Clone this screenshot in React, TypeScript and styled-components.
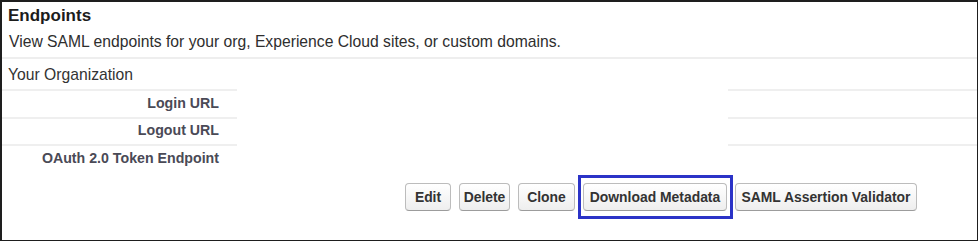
import React from "react";
import styled, { createGlobalStyle } from "styled-components";

const Global = createGlobalStyle`
  html, body { margin: 0; padding: 0; background: #fff; }
  body { font-family: "Liberation Sans", Arial, sans-serif; }
  * { box-sizing: border-box; }
`;

const Panel = styled.div`
  width: 978px;
  height: 241px;
  border: 2px solid #1e1e1e;
  border-right-width: 1.5px;
  border-bottom-width: 1.5px;
  background: #fff;
  display: flex;
  flex-direction: column;
`;

const Header = styled.div`
  padding: 4px 6px 5px 6px;
  border-bottom: 2px solid #eeeeee;
`;

const Title = styled.h2`
  margin: 0;
  font-size: 17px;
  line-height: 20px;
  font-weight: bold;
  color: #1c1c1c;
`;

const Description = styled.p`
  margin: 6px 0 0 1px;
  font-size: 15.7px;
  line-height: 20px;
  color: #2e2e2e;
`;

const Section = styled.div`
  padding: 6px 6px 4px 6px;
  font-size: 15.7px;
  line-height: 20px;
  color: #333;
`;

const DetailGrid = styled.div`
  display: grid;
  grid-template-columns: 235px 245px 246px 1fr;
`;

const Cell = styled.div<{ $line?: boolean }>`
  border-top: 2px solid ${(p) => (p.$line ? "#efefef" : "transparent")};
  padding: 2.5px 18px 5px 0;
  font-size: 14.2px;
  line-height: 18px;
  font-weight: bold;
  color: #4a4a56;
  text-align: right;
  min-height: 27.5px;
`;

const ButtonBar = styled.div`
  display: flex;
  gap: 8px;
  padding: 11px 0 0 403px;
`;

const Highlight = styled.span`
  position: relative;
  display: inline-flex;
  &::after {
    content: "";
    position: absolute;
    left: -5px;
    right: -6px;
    top: -8px;
    bottom: -8px;
    border: 3px solid #2b33c7;
    pointer-events: none;
  }
`;

const Button = styled.button<{ $w: number }>`
  width: ${(p) => p.$w}px;
  height: 28px;
  padding: 0;
  font-family: "Liberation Sans", Arial, sans-serif;
  font-size: 13.9px;
  font-weight: bold;
  color: #333;
  background: linear-gradient(#ffffff, #eeeeee);
  border: 1px solid #bcbcbc;
  border-bottom-color: #9c9c9c;
  border-radius: 4px;
  white-space: nowrap;
  cursor: pointer;
`;

const rows = ["Login URL", "Logout URL", "OAuth 2.0 Token Endpoint"];

export default function App() {
  return (
    <>
      <Global />
      <Panel>
        <Header>
          <Title>Endpoints</Title>
          <Description>
            View SAML endpoints for your org, Experience Cloud sites, or custom domains.
          </Description>
        </Header>
        <Section>Your Organization</Section>
        <DetailGrid>
          {rows.map((r) => (
            <React.Fragment key={r}>
              <Cell $line>{r}</Cell>
              <Cell />
              <Cell />
              <Cell $line />
            </React.Fragment>
          ))}
        </DetailGrid>
        <ButtonBar>
          <Button $w={46}>Edit</Button>
          <Button $w={51}>Delete</Button>
          <Button $w={57}>Clone</Button>
          <Highlight>
            <Button $w={144}>Download Metadata</Button>
          </Highlight>
          <Button $w={182}>SAML Assertion Validator</Button>
        </ButtonBar>
      </Panel>
    </>
  );
}
